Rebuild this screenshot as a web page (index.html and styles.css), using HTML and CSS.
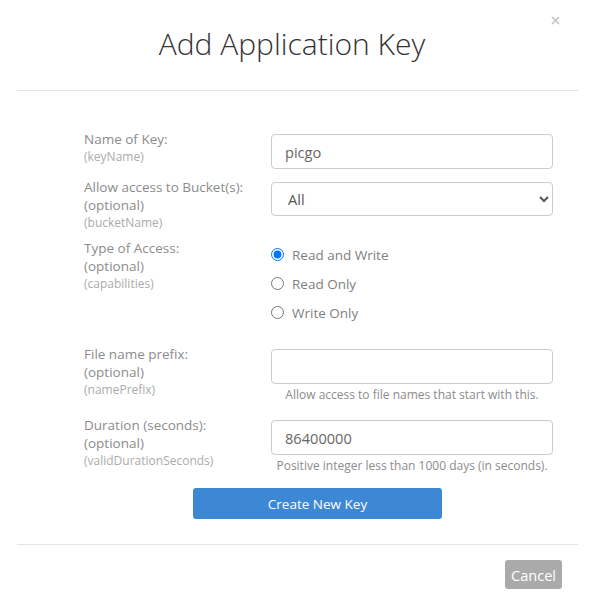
FILE: index.html
```html
<!DOCTYPE html>
<html lang="en">
<head>
<meta charset="utf-8">
<title>Add Application Key</title>
<link rel="stylesheet" href="styles.css">
</head>
<body>
<div class="modal">
  <div class="modal-header">
    <h1 class="modal-title">Add Application Key</h1>
    <button class="close" type="button" aria-label="Close">
      <svg width="9" height="9" viewBox="0 0 9 9"><path d="M1 1L8 8M8 1L1 8" stroke="#c4c4c4" stroke-width="1.6" fill="none"/></svg>
    </button>
  </div>
  <div class="modal-body">
    <div class="row row-1">
      <label class="label" for="keyName"><span class="main">Name of Key:</span><span class="sub">(keyName)</span></label>
      <div class="control"><input id="keyName" class="field" type="text" value="picgo"></div>
    </div>
    <div class="row row-2">
      <label class="label" for="bucketName"><span class="main">Allow access to Bucket(s):</span><span class="main">(optional)</span><span class="sub">(bucketName)</span></label>
      <div class="control"><select id="bucketName" class="field select"><option>All</option></select></div>
    </div>
    <div class="row row-3">
      <div class="label"><span class="main">Type of Access:</span><span class="main">(optional)</span><span class="sub">(capabilities)</span></div>
      <div class="control radios">
        <label class="radio"><input type="radio" name="cap" checked><span>Read and Write</span></label>
        <label class="radio"><input type="radio" name="cap"><span>Read Only</span></label>
        <label class="radio"><input type="radio" name="cap"><span>Write Only</span></label>
      </div>
    </div>
    <div class="row row-4">
      <label class="label" for="namePrefix"><span class="main">File name prefix:</span><span class="main">(optional)</span><span class="sub">(namePrefix)</span></label>
      <div class="control"><input id="namePrefix" class="field" type="text" value=""><p class="help">Allow access to file names that start with this.</p></div>
    </div>
    <div class="row row-5">
      <label class="label" for="validDurationSeconds"><span class="main">Duration (seconds):</span><span class="main">(optional)</span><span class="sub">(validDurationSeconds)</span></label>
      <div class="control"><input id="validDurationSeconds" class="field" type="text" value="86400000"><p class="help">Positive integer less than 1000 days (in seconds).</p></div>
    </div>
    <div class="actions"><button class="btn-primary" type="button">Create New Key</button></div>
  </div>
  <div class="modal-footer">
    <button class="btn-cancel" type="button">Cancel</button>
  </div>
</div>
</body>
</html>
```
FILE: styles.css
```css
* { box-sizing: border-box; }
html, body { margin: 0; padding: 0; background: #fff; }
body { font-family: "Open Sans", "Liberation Sans", sans-serif; color: #8c8c8c; }

.modal { width: 595px; min-height: 601px; position: relative; }

.modal-header {
  height: 91px;
  margin: 0 17px;
  border-bottom: 1px solid #e5e5e5;
  display: flex;
  align-items: flex-start;
  justify-content: center;
  padding-right: 11px;
}
.modal-title {
  margin: 24px 0 0;
  font-size: 30px;
  line-height: 40px;
  font-weight: 300;
  color: #333;
}
.close {
  position: absolute;
  top: 16px;
  right: 35px;
  width: 9px;
  height: 9px;
  padding: 0;
  border: 0;
  background: none;
  line-height: 0;
}

.modal-body { padding: 39px 0 25px 84px; }

.row { display: grid; grid-template-columns: 187px 282px; }
.row-1 { margin-bottom: 9px; }
.row-2 { margin-bottom: 7px; }
.row-3 { margin-bottom: 18px; }
.row-4 { margin-bottom: 12px; }
.row-5 { margin-bottom: 13px; }

.label { display: flex; flex-direction: column; }
.label .main { font-size: 13.5px; line-height: 18px; color: #8c8c8c; }
.label .sub { font-size: 12px; line-height: 18px; color: #ababab; }

.control { padding-top: 4px; }
.field {
  display: block;
  width: 282px;
  height: 35px;
  border: 1px solid #ccc;
  border-radius: 4px;
  padding: 0 13px;
  font-family: "Open Sans", "Liberation Sans", sans-serif;
  font-size: 14.6px;
  color: #666;
  background: #fff;
  outline: none;
}
.select { height: 34px; padding-left: 12px; color: #555; }

.radios { padding-top: 1px; display: flex; flex-direction: column; }
.radio { display: flex; align-items: center; height: 29px; font-size: 13.5px; color: #808080; }
.radio input { margin: 0 8px 0 0; width: 13px; height: 13px; }

.help {
  margin: 2px 0 0;
  font-size: 12px;
  line-height: 18px;
  color: #8c8c8c;
  text-align: center;
}

.actions { padding-left: 109px; }
.btn-primary {
  display: block;
  width: 249px;
  height: 31px;
  border: 0;
  border-radius: 3px;
  background: #3d88d4;
  color: #fff;
  font-family: "Open Sans", "Liberation Sans", sans-serif;
  font-size: 13.5px;
}

.modal-footer {
  margin: 0 17px;
  border-top: 1px solid #e5e5e5;
  padding: 15px 16px 0 0;
  display: flex;
  justify-content: flex-end;
}
.btn-cancel {
  width: 57px;
  height: 29px;
  border: 0;
  border-radius: 3px;
  background: #aaa;
  color: #fff;
  padding: 0;
  font-family: "Open Sans", "Liberation Sans", sans-serif;
  font-size: 14.6px;
}
```
